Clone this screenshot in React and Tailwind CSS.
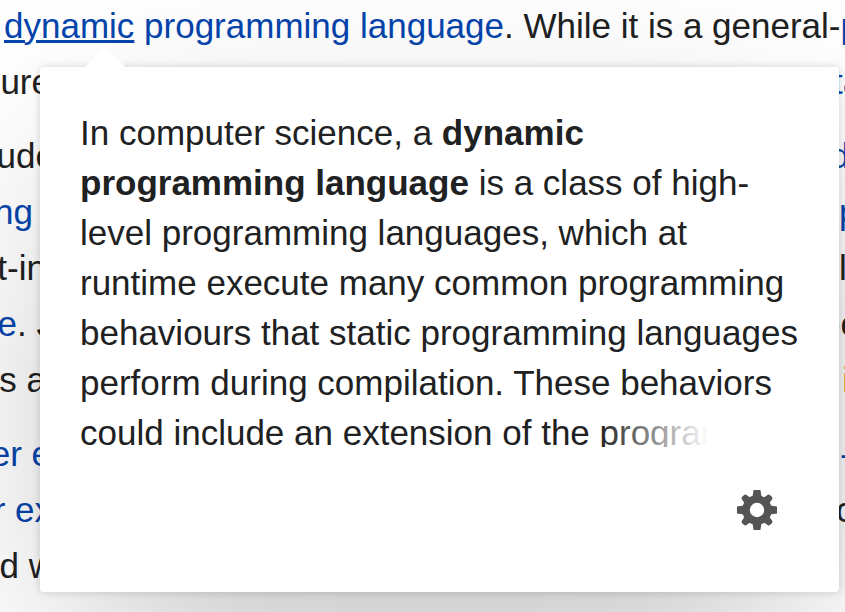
import React from "react";

const link = "text-[#0645ad]";

function Row({ left, leftWidth, right, rightWidth }) {
  return (
    <div className="flex justify-between overflow-hidden">
      <div className={`flex shrink-0 justify-end ${leftWidth}`}>
        <span>{left}</span>
      </div>
      <div className={`shrink-0 ${rightWidth}`}>{right}</div>
    </div>
  );
}

function A({ children, className = link }) {
  return (
    <a href="#" className={className}>
      {children}
    </a>
  );
}

function Gear() {
  return (
    <svg viewBox="0 0 40 40" className="size-10" fill="#545454" aria-hidden="true">
      <path
        fillRule="evenodd"
        d="M20 5.3a14.7 14.7 0 1 0 0 29.4a14.7 14.7 0 1 0 0-29.4zM20 12.8a7.2 7.2 0 1 1 0 14.4a7.2 7.2 0 1 1 0-14.4z"
      />
      {[0, 90, 180, 270].map((angle) => (
        <path key={angle} transform={`rotate(${angle} 20 20)`} d="M16.6 0h6.8l1.2 7h-9.2z" />
      ))}
      {[45, 135, 225, 315].map((angle) => (
        <path
          key={angle}
          transform={`rotate(${angle} 20 20)`}
          d="M16.8 2q.2-1.8 2-1.8h2.4q1.8 0 2 1.8l1 6h-8.4z"
        />
      ))}
    </svg>
  );
}

export default function App() {
  return (
    <div className="relative h-screen overflow-hidden bg-white font-['Liberation_Sans',Arial,sans-serif] text-[35px] leading-[56px] text-[#202122]">
      <main className="-mt-0.5 flex flex-col gap-[18px] whitespace-nowrap">
        <div>
          <div className="overflow-hidden pl-1">
            <a href="#" className="text-[#0645ad]">
              <span className="underline decoration-[3px]">dynamic</span> programming language
            </a>
            . While it is a general-<A>purpose</A>
          </div>
          <Row left="ure" leftWidth="w-[51px]" right={<A>tasks</A>} rightWidth="w-3" />
        </div>
        <div>
          <Row left="ude" leftWidth="w-[55px]" right={<A>dynamic</A>} rightWidth="w-[15px]" />
          <Row left={<A>programming</A>} leftWidth="w-[33px]" right={<A>programming</A>} rightWidth="w-[6px]" />
          <Row left="built-in" leftWidth="w-[46px]" right="language" rightWidth="w-[6px]" />
          <Row left={<><A>language</A>. J</>} leftWidth="w-[54px]" right="ecma" rightWidth="w-6" />
          <Row left="is a" leftWidth="w-[46px]" right={<A className="text-[#faa043]">in</A>} rightWidth="w-[3px]" />
        </div>
        <div>
          <Row left={<A>other e</A>} leftWidth="w-[51px]" right={<A>-side</A>} rightWidth="w-[5px]" />
          <Row left={<A>or ex</A>} leftWidth="w-[52px]" right="code" rightWidth="w-[9px]" />
          <Row left="and w" leftWidth="w-[54px]" right="" rightWidth="w-0" />
        </div>
      </main>

      <aside className="absolute top-[67px] right-[6px] left-10">
        <div className="absolute inset-x-[50px] top-[125px] -bottom-[25px] bg-black/30 blur-[112px]" />
        <div className="relative rounded-[4px] bg-white shadow-[0_0_8px_rgba(0,0,0,0.16)]">
          <svg viewBox="0 0 42 21" className="absolute -top-5 left-11 h-[21px] w-[42px]" aria-hidden="true">
            <path d="M0 21 21 0 42 21z" fill="#fff" />
          </svg>
          <div className="px-10 pt-[41px]">
            <div className="relative h-[339px] overflow-hidden">
              <p className="leading-[50px]">
                In computer science, a <b>dynamic programming language</b> is a class of high-level
                programming languages, which at runtime execute many common programming behaviours
                that static programming languages perform during compilation. These behaviors could
                include an extension of the program, by adding new code.
              </p>
              <div className="absolute right-0 bottom-0 h-10 w-[200px] bg-linear-to-r from-white/0 to-white to-55%" />
            </div>
          </div>
          <div className="flex justify-end px-[62px] pt-[43px] pb-[62px]">
            <button type="button" aria-label="Preview settings" className="cursor-pointer">
              <Gear />
            </button>
          </div>
        </div>
      </aside>
    </div>
  );
}
